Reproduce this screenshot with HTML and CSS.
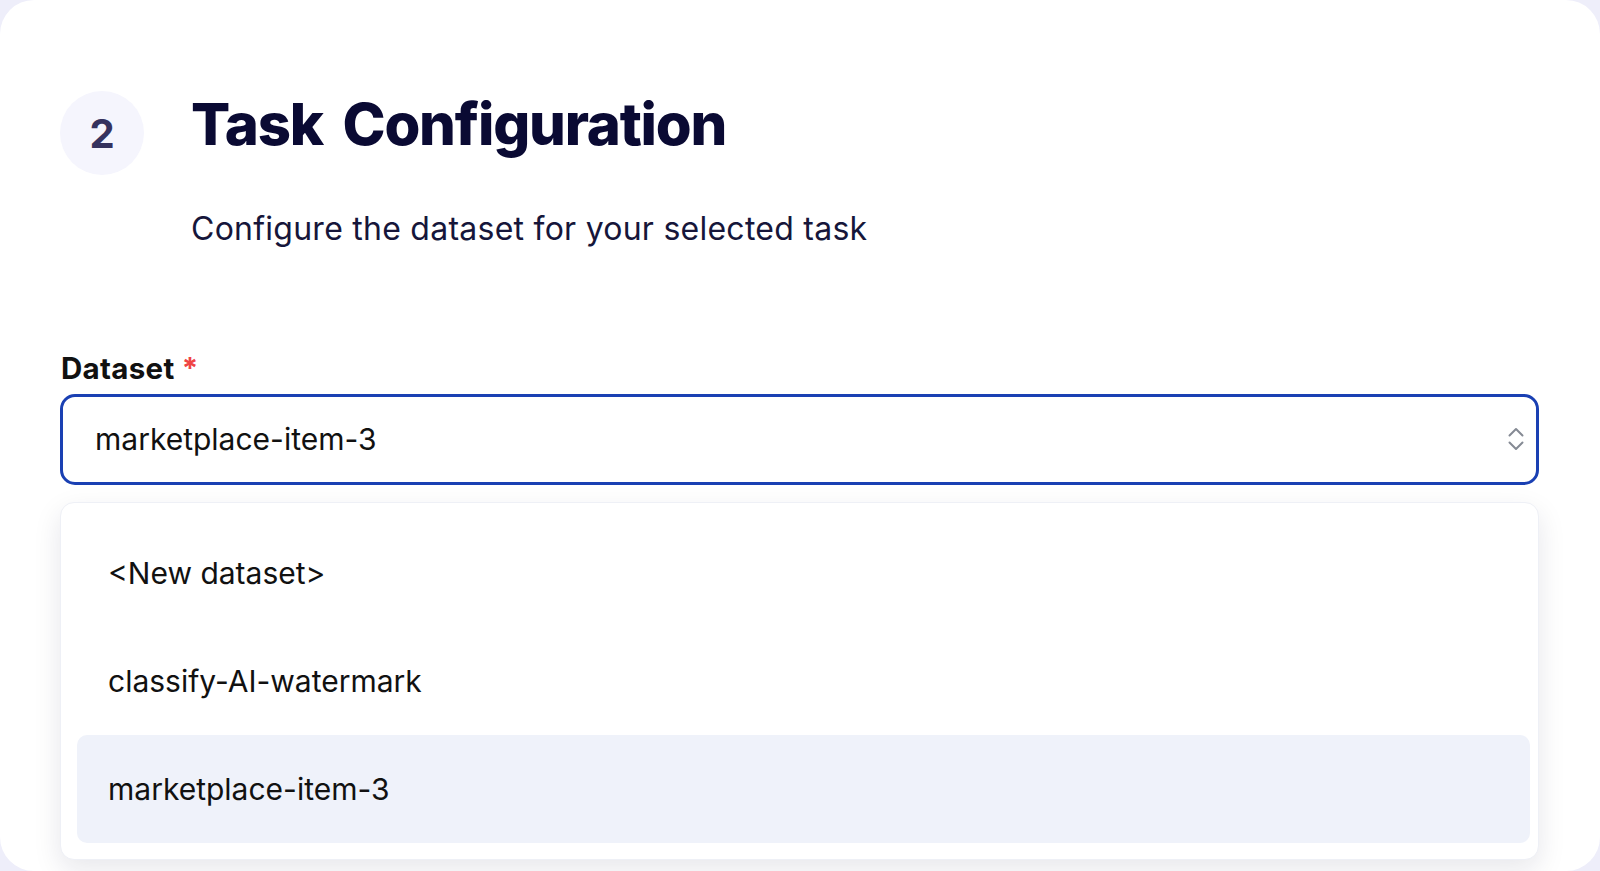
FILE: index.html
```html
<!DOCTYPE html>
<html lang="en">
<head>
<meta charset="utf-8">
<title>Task Configuration</title>
<link rel="stylesheet" href="styles.css">
</head>
<body>
<main class="card">
  <header class="step-header">
    <div class="step-badge">2</div>
    <h1 class="step-title">Task Configuration</h1>
    <p class="step-subtitle">Configure the dataset for your selected task</p>
  </header>

  <section class="field">
    <label class="field-label">Dataset <span class="required">*</span></label>
    <div class="select">
      <span class="select-value">marketplace-item-3</span>
      <svg class="select-caret" width="16" height="24" viewBox="0 0 16 24" aria-hidden="true">
        <path d="M1.5 8.5 L8 2 L14.5 8.5" fill="none" stroke="#858a94" stroke-width="2" stroke-linecap="round" stroke-linejoin="round"/>
        <path d="M1.5 15.5 L8 22 L14.5 15.5" fill="none" stroke="#858a94" stroke-width="2" stroke-linecap="round" stroke-linejoin="round"/>
      </svg>
    </div>
    <ul class="options">
      <li class="option">&lt;New dataset&gt;</li>
      <li class="option">classify-AI-watermark</li>
      <li class="option option-selected">marketplace-item-3</li>
    </ul>
  </section>
</main>
</body>
</html>
```

FILE: styles.css
```css
html, body {
  margin: 0;
  padding: 0;
}

body {
  width: 1600px;
  height: 871px;
  overflow: hidden;
  background: #eeeefa;
  font-family: Inter, "Liberation Sans", sans-serif;
}

.card {
  box-sizing: border-box;
  width: 1600px;
  height: 871px;
  background: #ffffff;
  border-radius: 34px;
  padding: 91px 61px 0 60px;
}

.step-header {
  display: grid;
  grid-template-columns: 84px 1fr;
  column-gap: 47px;
  align-items: start;
}

.step-badge {
  grid-row: 1 / span 2;
  width: 84px;
  height: 84px;
  border-radius: 50%;
  background: #f5f5fd;
  color: #35325e;
  font-size: 40px;
  font-weight: 700;
  display: flex;
  align-items: center;
  justify-content: center;
}

.step-title {
  margin: 4px 0 0;
  font-size: 58px;
  line-height: 1;
  font-weight: 800;
  color: #0a0a33;
  letter-spacing: -1.2px;
  word-spacing: 8px;
}

.step-subtitle {
  margin: 60px 0 0;
  font-size: 32px;
  line-height: 1;
  font-weight: 400;
  color: #16163a;
  letter-spacing: 0.25px;
}

.field {
  margin-top: 110px;
}

.field-label {
  display: block;
  font-size: 29.5px;
  line-height: 1;
  font-weight: 700;
  color: #111111;
  margin-left: 1px;
  margin-top: -1px;
  letter-spacing: 0.3px;
}

.required {
  color: #ef4444;
}

.select {
  box-sizing: border-box;
  margin-top: 10px;
  height: 91px;
  border: 3px solid #1a40b3;
  border-radius: 15px;
  display: flex;
  align-items: center;
  justify-content: space-between;
  padding: 0 12px 0 32px;
}

.select-value {
  font-size: 30px;
  color: #111111;
}

.select-caret {
  display: block;
}

.options {
  list-style: none;
  margin: 17px 0 0;
  padding: 16px 8px 16px 16px;
  background: #ffffff;
  border: 1px solid #eef0f6;
  border-radius: 14px;
  box-shadow: 0 10px 28px rgba(20, 20, 60, 0.10);
}

.option {
  height: 108px;
  display: flex;
  align-items: center;
  padding-left: 31px;
  font-size: 30px;
  color: #111111;
  border-radius: 10px;
}

.option-selected {
  background: #eff2fa;
}
```
